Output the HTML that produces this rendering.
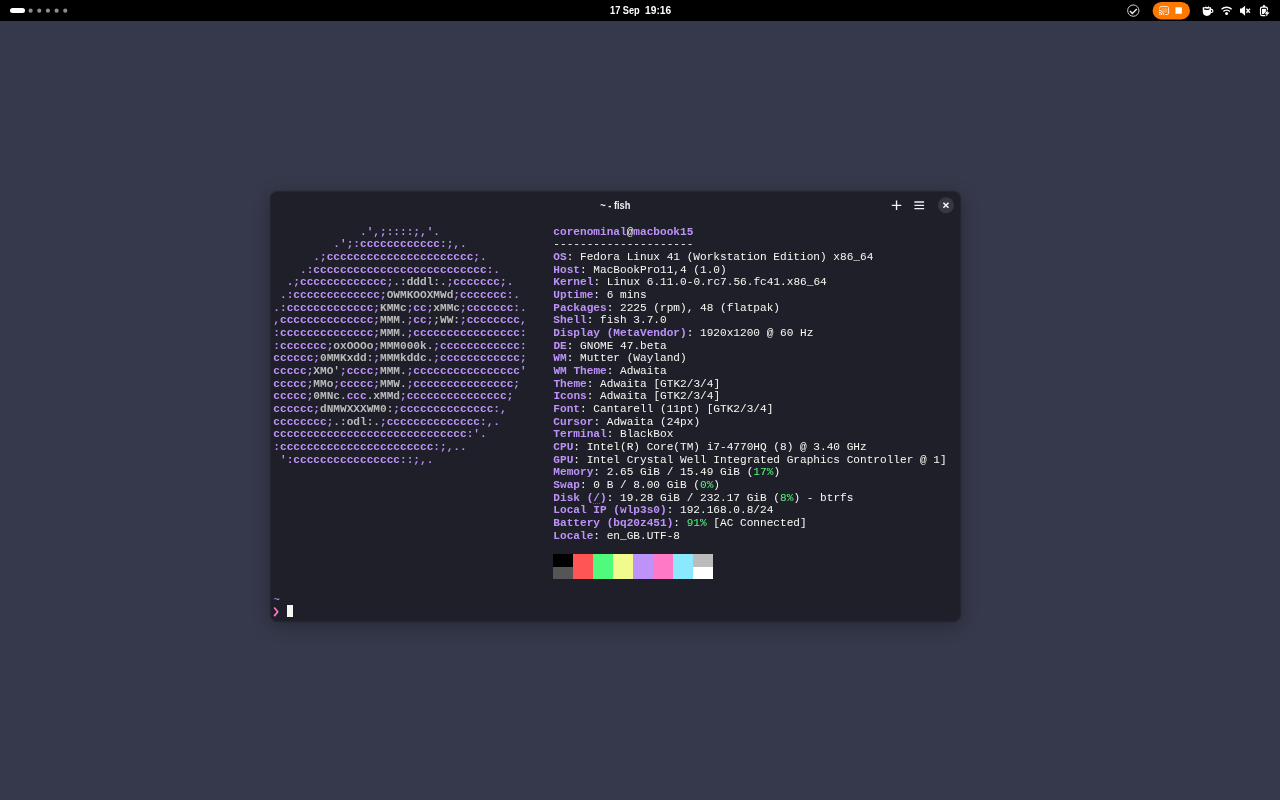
<!DOCTYPE html>
<html>
<head>
<meta charset="utf-8">
<title>desktop</title>
<style>
html,body{margin:0;padding:0;}
body{width:1280px;height:800px;overflow:hidden;background:#36394b;position:relative;font-family:"Liberation Sans",sans-serif;}
#stage{position:absolute;left:0;top:0;width:1280px;height:800px;will-change:transform;}
#topbar{position:absolute;left:0;top:0;width:1280px;height:21.33px;background:#000;}
#ws-pill{position:absolute;left:10.4px;top:8px;width:14.4px;height:5.33px;border-radius:3px;background:#fff;}
.ws-dot{position:absolute;top:8.6px;width:4.2px;height:4.2px;border-radius:50%;background:#8a8a8a;}
.clk{position:absolute;top:0;height:21.33px;line-height:21.6px;color:#fff;font-weight:bold;font-size:10.2px;white-space:pre;transform-origin:0 50%;}
#clock1{left:609.9px;transform:scaleX(0.906);}
#clock2{left:644.8px;transform:scaleX(1.004);}
#win{position:absolute;left:270.1px;top:190.6px;width:690.7px;height:431.4px;border-radius:8px;background:#1e1f29;box-shadow:inset 0 0 0 0.67px rgba(255,255,255,0.05),0 0 1.5px rgba(0,0,0,0.35),0 4px 18px rgba(0,0,0,0.28);}
#title{position:absolute;left:0;right:0;top:0;height:29.4px;line-height:29.4px;text-align:center;color:#f0f0f0;font-weight:bold;font-size:11px;transform:scaleX(0.845);}
#term{position:absolute;left:3.23px;top:34.97px;margin:0;font-family:"Liberation Mono",monospace;font-size:11.111px;line-height:12.6667px;color:#f8f8f2;white-space:pre;letter-spacing:0;}
#term b{font-weight:bold;}
#term i{font-style:normal;}
#term u{text-decoration:underline dotted rgba(189,147,249,0.45);text-decoration-thickness:0.7px;text-underline-offset:1.5px;}
.p{color:#bd93f9;}
.w{color:#bbbbbb;}
.g{color:#50fa7b;}
.blk{position:absolute;width:20px;height:12.6667px;}
#blocks{position:absolute;left:283.23px;top:363.4px;width:160px;height:25.33px;}
#tilde{position:absolute;left:3.23px;top:403.07px;font-family:"Liberation Mono",monospace;font-size:11.111px;line-height:12.6667px;color:#bd93f9;}
#prompt{position:absolute;left:3.23px;top:413.27px;width:7px;height:13px;}
#cursor{position:absolute;left:16.57px;top:414.07px;width:6.67px;height:12.67px;background:#f8f8f2;}
</style>
</head>
<body>
<div id="stage">
<div id="topbar">
  <div id="ws-pill"></div>
  <div id="clock1" class="clk">17 Sep</div><div id="clock2" class="clk">19:16</div>
<svg id="tray" width="1280" height="22" viewBox="0 0 1280 22" style="position:absolute;left:0;top:0">
  <circle cx="30.60" cy="10.7" r="2.1" fill="#8c8c8c"/>
  <circle cx="39.27" cy="10.7" r="2.1" fill="#8c8c8c"/>
  <circle cx="47.93" cy="10.7" r="2.1" fill="#8c8c8c"/>
  <circle cx="56.60" cy="10.7" r="2.1" fill="#8c8c8c"/>
  <circle cx="65.27" cy="10.7" r="2.1" fill="#8c8c8c"/>
  <!-- check circle -->
  <circle cx="1133.3" cy="10.6" r="5.65" fill="none" stroke="#d6d6d6" stroke-width="1"/>
  <path d="M1130 11.1 L1132.3 13.4 L1136.8 9.1" fill="none" stroke="#f4f4f4" stroke-width="1.4"/>
  <!-- screencast pill -->
  <rect x="1152.6" y="2" width="37.4" height="17.4" rx="8.7" fill="#ff7800"/>
  <rect x="1161.5" y="8.2" width="6" height="4.4" fill="#ff9d4d"/>
  <path d="M1159.6 8.8 V8 A1.4 1.4 0 0 1 1161 6.6 H1167.2 A1.4 1.4 0 0 1 1168.6 8 V13.1 A1.4 1.4 0 0 1 1167.2 14.5 H1165.4" fill="none" stroke="#ffe6cf" stroke-width="1"/>
  <path d="M1158.4 15.8 V9.4 H1159 A5.7 5.7 0 0 1 1164.7 15.1 V15.8 Z" fill="#ff7800"/>
  <path d="M1159 10.3 A4.8 4.8 0 0 1 1163.8 15.1 M1159 12.2 A2.9 2.9 0 0 1 1161.9 15.1 M1159 14 A1.1 1.1 0 0 1 1160.1 15.1" fill="none" stroke="#fff" stroke-width="1"/>
  <rect x="1175.4" y="7.3" width="6.5" height="6.4" rx="0.5" fill="#fff"/>
  <!-- coffee cup -->
  <path d="M1202.8 7.6 H1211 V11.8 A4.1 4.1 0 0 1 1202.8 11.8 Z" fill="#fff"/>
  <path d="M1202.8 7.6 Q1206.9 6.2 1211 7.6 L1211 9.6 L1202.8 9.6 Z" fill="#fff"/>
  <ellipse cx="1206.9" cy="9" rx="3" ry="0.9" fill="#000"/>
  <path d="M1205.4 8.6 L1205.9 5.6 L1206.6 8.6 Z M1207.6 8.6 L1208.4 5.2 L1209 8.6 Z M1206.4 9 L1207.1 7.2 L1207.7 9 Z" fill="#fff"/>
  <path d="M1210.6 9.4 H1211.3 A1.55 1.55 0 0 1 1211.3 12.5 H1210.3" fill="none" stroke="#fff" stroke-width="1.2"/>
  <!-- wifi -->
  <path d="M1221.5 9.3 A7.3 7.3 0 0 1 1231.7 9.3" fill="none" stroke="#fff" stroke-width="1.35"/>
  <path d="M1223.4 11.5 A4.5 4.5 0 0 1 1229.8 11.5" fill="none" stroke="#fff" stroke-width="1.35"/>
  <circle cx="1226.6" cy="13.5" r="1.5" fill="#fff"/>
  <!-- volume muted -->
  <path d="M1240 8.6 H1241.6 L1245.1 5.7 V15.7 L1241.6 12.8 H1240 Z" fill="#fff"/>
  <path d="M1246.4 8.7 L1249.9 12.7 M1249.9 8.7 L1246.4 12.7" fill="none" stroke="#f4f4f4" stroke-width="1.5"/>
  <!-- battery charging -->
  <path d="M1263 6.9 L1263.4 5.4 H1264.6 L1265 6.9" fill="#fff" stroke="#fff" stroke-width="0.8"/>
  <rect x="1260.5" y="7.2" width="6.9" height="8.4" rx="1.5" fill="none" stroke="#fff" stroke-width="1.2"/>
  <rect x="1262" y="8.9" width="3.9" height="5.2" fill="#fff"/>
  <path d="M1267.9 10.3 L1264.5 13.8 H1266.5 L1265.7 16.4 L1269.7 12.6 H1267.5 Z" fill="#000" stroke="#000" stroke-width="1.2" stroke-linejoin="round"/>
  <path d="M1267.9 10.3 L1264.5 13.8 H1266.5 L1265.7 16.4 L1269.7 12.6 H1267.5 Z" fill="#fff"/>
</svg>
</div>
<div id="win">
  <div id="title">~ - fish</div>
<svg id="ctl" width="80" height="26" viewBox="886 193 80 26" style="position:absolute;left:615.9px;top:2.4px">
  <path d="M891.8 205.3 H901.3 M896.55 200.5 V210" fill="none" stroke="#f4f4f4" stroke-width="1.35"/>
  <path d="M914.4 201.95 H924.1 M914.4 205.3 H924.1 M914.4 208.6 H924.1" fill="none" stroke="#f0f0f0" stroke-width="1.35"/>
  <circle cx="946" cy="205.25" r="8" fill="#363740"/>
  <path d="M943.4 202.7 L948.5 207.8 M948.5 202.7 L943.4 207.8" fill="none" stroke="#f4f4f4" stroke-width="1.6"/>
</svg>
<pre id="term"><b class="p">             .',;::::;,'.</b>                 <b class="p">corenominal</b>@<b class="p">macbook15</b>
<b class="p">         .';:cccccccccccc:;,.</b>             ---------------------
<b class="p">      .;cccccccccccccccccccccc;.</b>          <b class="p">OS</b>: Fedora Linux 41 (Workstation Edition) x86_64
<b class="p">    .:cccccccccccccccccccccccccc:.</b>        <b class="p">Host</b>: MacBookPro11,4 (1.0)
<b class="p">  .;ccccccccccccc;</b><b class="w">.:dddl:.</b><b class="p">;ccccccc;.</b>      <b class="p">Kernel</b>: Linux 6.11.0-0.rc7.56.fc41.x86_64
<b class="p"> .:ccccccccccccc;</b><b class="w">OWMKOOXMWd</b><b class="p">;ccccccc:.</b>     <b class="p">Uptime</b>: 6 mins
<b class="p">.:ccccccccccccc;</b><b class="w">KMMc</b><b class="p">;cc;</b><b class="w">xMMc</b><b class="p">;ccccccc:.</b>    <b class="p">Packages</b>: 2225 (rpm), 48 (flatpak)
<b class="p">,cccccccccccccc;</b><b class="w">MMM.</b><b class="p">;cc;</b><b class="w">;WW:</b><b class="p">;cccccccc,</b>    <b class="p">Shell</b>: fish 3.7.0
<b class="p">:cccccccccccccc;</b><b class="w">MMM.</b><b class="p">;cccccccccccccccc:</b>    <b class="p">Display (MetaVendor)</b>: 1920x1200 @ 60 Hz
<b class="p">:ccccccc;</b><b class="w">oxOOOo</b><b class="p">;</b><b class="w">MMM000k.</b><b class="p">;cccccccccccc:</b>    <b class="p">DE</b>: GNOME 47.beta
<b class="p">cccccc;</b><b class="w">0MMKxdd:</b><b class="p">;</b><b class="w">MMMkddc.</b><b class="p">;cccccccccccc;</b>    <b class="p">WM</b>: Mutter (Wayland)
<b class="p">ccccc;</b><b class="w">XMO'</b><b class="p">;cccc;</b><b class="w">MMM.</b><b class="p">;cccccccccccccccc'</b>    <b class="p">WM Theme</b>: Adwaita
<b class="p">ccccc;</b><b class="w">MMo</b><b class="p">;ccccc;</b><b class="w">MMW.</b><b class="p">;ccccccccccccccc;</b>     <b class="p">Theme</b>: Adwaita [GTK2/3/4]
<b class="p">ccccc;</b><b class="w">0MNc.</b><b class="p">ccc</b><b class="w">.xMMd</b><b class="p">;ccccccccccccccc;</b>      <b class="p">Icons</b>: Adwaita [GTK2/3/4]
<b class="p">cccccc;</b><b class="w">dNMWXXXWM0:</b><b class="p">;cccccccccccccc:,</b>       <b class="p">Font</b>: Cantarell (11pt) [GTK2/3/4]
<b class="p">cccccccc;</b><b class="w">.:odl:.</b><b class="p">;cccccccccccccc:,.</b>        <b class="p">Cursor</b>: Adwaita (24px)
<b class="p">ccccccccccccccccccccccccccccc:'.</b>          <b class="p">Terminal</b>: BlackBox
<b class="p">:ccccccccccccccccccccccc:;,..</b>             <b class="p">CPU</b>: Intel(R) Core(TM) i7-4770HQ (8) @ 3.40 GHz
<b class="p"> ':cccccccccccccccc::;,.</b>                  <b class="p">GPU</b>: Intel Crystal Well Integrated Graphics Controller @ 1]
                                          <b class="p">Memory</b>: 2.65 GiB / 15.49 GiB (<i class="g">17%</i>)
                                          <b class="p">Swap</b>: 0 B / 8.00 GiB (<i class="g">0%</i>)
                                          <b class="p">Disk (<u>/</u>)</b>: 19.28 GiB / 232.17 GiB (<i class="g">8%</i>) - btrfs
                                          <b class="p">Local IP (wlp3s0)</b>: 192.168.0.8/24
                                          <b class="p">Battery (bq20z451)</b>: <i class="g">91%</i> [AC Connected]
                                          <b class="p">Locale</b>: en_GB.UTF-8</pre>
<div id="blocks">
  <div class="blk" style="left:0.000px;top:0;background:#000000"></div>
  <div class="blk" style="left:20.000px;top:0;background:#ff5555"></div>
  <div class="blk" style="left:40.000px;top:0;background:#50fa7b"></div>
  <div class="blk" style="left:60.000px;top:0;background:#f1fa8c"></div>
  <div class="blk" style="left:80.000px;top:0;background:#bd93f9"></div>
  <div class="blk" style="left:100.000px;top:0;background:#ff79c6"></div>
  <div class="blk" style="left:120.000px;top:0;background:#8be9fd"></div>
  <div class="blk" style="left:140.000px;top:0;background:#bbbbbb"></div>
  <div class="blk" style="left:0.000px;top:12.6667px;background:#555555"></div>
  <div class="blk" style="left:20.000px;top:12.6667px;background:#ff5555"></div>
  <div class="blk" style="left:40.000px;top:12.6667px;background:#50fa7b"></div>
  <div class="blk" style="left:60.000px;top:12.6667px;background:#f1fa8c"></div>
  <div class="blk" style="left:80.000px;top:12.6667px;background:#bd93f9"></div>
  <div class="blk" style="left:100.000px;top:12.6667px;background:#ff79c6"></div>
  <div class="blk" style="left:120.000px;top:12.6667px;background:#8be9fd"></div>
  <div class="blk" style="left:140.000px;top:12.6667px;background:#ffffff"></div>
</div>
<div id="tilde">~</div>
<div id="prompt"><svg width="7" height="13" viewBox="0 0 7 13"><path d="M1.2 2.5 L4.7 6.8 L1.2 11.1" fill="none" stroke="#ff79c6" stroke-width="1.7"/></svg></div>
<div id="cursor"></div>
</div>
</div>
</body>
</html>
